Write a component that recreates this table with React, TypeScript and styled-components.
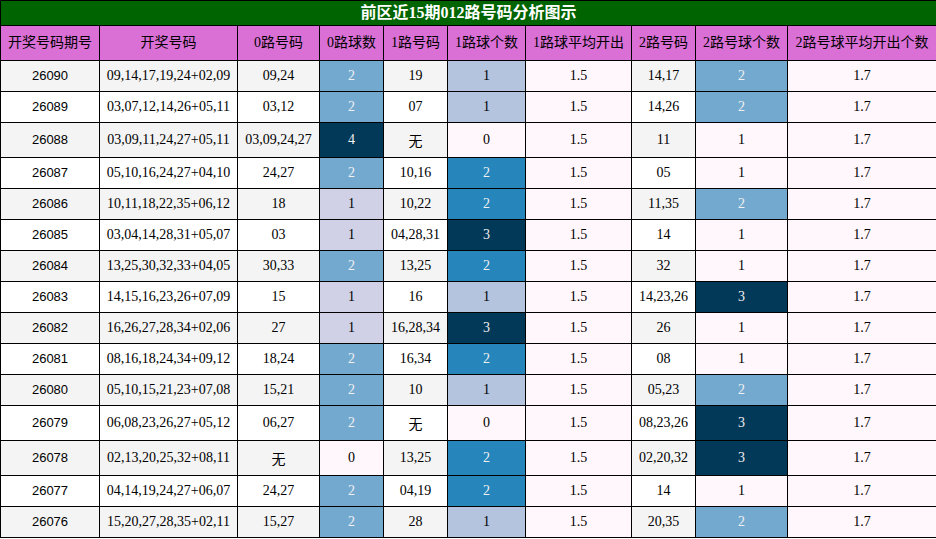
import React from "react";
import styled, { createGlobalStyle } from "styled-components";

const GlobalStyle = createGlobalStyle`
  html, body { margin: 0; padding: 0; background: #ffffff; }
  body { font-family: "Liberation Serif", "Noto Sans CJK SC", serif; }
`;

const Table = styled.table`
  width: 936px;
  table-layout: fixed;
  border-collapse: collapse;
  font-family: "Liberation Serif", "Noto Sans CJK SC", serif;
  font-size: 14px;
  color: #000;
`;

const Caption = styled.th`
  background: #006400;
  color: #ffffff;
  font-weight: bold;
  font-size: 16px;
  line-height: 24px;
  padding: 0;
  border: 1px solid #000;
  text-align: center;
  font-family: "Liberation Serif", "Noto Sans CJK SC", serif;
`;

const HeadCell = styled.th`
  background: #da70d6;
  color: #000;
  font-weight: normal;
  font-size: 14px;
  line-height: 34px;
  padding: 0 2px;
  border: 1px solid #000;
  text-align: center;
  white-space: nowrap;
  font-family: "Liberation Serif", "Noto Sans CJK SC", serif;
`;

const Cell = styled.td<{ $bg: string; $fg: string; $sans?: boolean }>`
  background: ${(p) => p.$bg};
  color: ${(p) => p.$fg};
  border: 1px solid #000;
  padding: 7px 2px;
  text-align: center;
  white-space: nowrap;
  font-family: ${(p) =>
    p.$sans
      ? `"Liberation Sans", "Noto Sans CJK SC", sans-serif`
      : `"Liberation Serif", "Noto Sans CJK SC", serif`};
  font-size: ${(p) => (p.$sans ? "13px" : "14px")};
  line-height: ${(p) => (p.$sans ? "16px" : "normal")};
`;

const widths = [99, 138, 82, 64, 64, 78, 106, 64, 92, 149];
const headers = [
  "开奖号码期号",
  "开奖号码",
  "0路号码",
  "0路球数",
  "1路号码",
  "1路球个数",
  "1路球平均开出",
  "2路号码",
  "2路号球个数",
  "2路号球平均开出个数",
];

type Row = [string, string, string, number, string, number, string, string, number, string];

const rows: Row[] = [
  ["26090", "09,14,17,19,24+02,09", "09,24", 2, "19", 1, "1.5", "14,17", 2, "1.7"],
  ["26089", "03,07,12,14,26+05,11", "03,12", 2, "07", 1, "1.5", "14,26", 2, "1.7"],
  ["26088", "03,09,11,24,27+05,11", "03,09,24,27", 4, "无", 0, "1.5", "11", 1, "1.7"],
  ["26087", "05,10,16,24,27+04,10", "24,27", 2, "10,16", 2, "1.5", "05", 1, "1.7"],
  ["26086", "10,11,18,22,35+06,12", "18", 1, "10,22", 2, "1.5", "11,35", 2, "1.7"],
  ["26085", "03,04,14,28,31+05,07", "03", 1, "04,28,31", 3, "1.5", "14", 1, "1.7"],
  ["26084", "13,25,30,32,33+04,05", "30,33", 2, "13,25", 2, "1.5", "32", 1, "1.7"],
  ["26083", "14,15,16,23,26+07,09", "15", 1, "16", 1, "1.5", "14,23,26", 3, "1.7"],
  ["26082", "16,26,27,28,34+02,06", "27", 1, "16,28,34", 3, "1.5", "26", 1, "1.7"],
  ["26081", "08,16,18,24,34+09,12", "18,24", 2, "16,34", 2, "1.5", "08", 1, "1.7"],
  ["26080", "05,10,15,21,23+07,08", "15,21", 2, "10", 1, "1.5", "05,23", 2, "1.7"],
  ["26079", "06,08,23,26,27+05,12", "06,27", 2, "无", 0, "1.5", "08,23,26", 3, "1.7"],
  ["26078", "02,13,20,25,32+08,11", "无", 0, "13,25", 2, "1.5", "02,20,32", 3, "1.7"],
  ["26077", "04,14,19,24,27+06,07", "24,27", 2, "04,19", 2, "1.5", "14", 1, "1.7"],
  ["26076", "15,20,27,28,35+02,11", "15,27", 2, "28", 1, "1.5", "20,35", 2, "1.7"],
];

// PuBu colormap stops
const PUBU = [
  "#fff7fb", "#ece7f2", "#d0d1e6", "#a6bddb", "#74a9cf",
  "#3690c0", "#0570b0", "#045a8d", "#023858",
];

function hexToRgb(h: string): number[] {
  const n = parseInt(h.slice(1), 16);
  return [(n >> 16) & 255, (n >> 8) & 255, n & 255];
}

function pubu(t: number): number[] {
  const x = Math.max(0, Math.min(1, t)) * (PUBU.length - 1);
  const i = Math.min(PUBU.length - 2, Math.floor(x));
  const f = x - i;
  const a = hexToRgb(PUBU[i]);
  const b = hexToRgb(PUBU[i + 1]);
  return a.map((v, k) => Math.round(v + (b[k] - v) * f));
}

function lum(c: number[]): number {
  const l = c.map((v) => {
    const s = v / 255;
    return s <= 0.03928 ? s / 12.92 : Math.pow((s + 0.055) / 1.055, 2.4);
  });
  return 0.2126 * l[0] + 0.7152 * l[1] + 0.0722 * l[2];
}

const gradientCols = [3, 5, 6, 8, 9];

function colRange(ci: number): [number, number] {
  const vals = rows.map((r) => Number(r[ci]));
  return [Math.min(...vals), Math.max(...vals)];
}

const ranges: Record<number, [number, number]> = {};
gradientCols.forEach((c) => (ranges[c] = colRange(c)));

function cellColors(ci: number, ri: number, v: string | number): { bg: string; fg: string } {
  if (gradientCols.includes(ci)) {
    const [lo, hi] = ranges[ci];
    const t = hi === lo ? 0 : (Number(v) - lo) / (hi - lo);
    const c = pubu(t);
    const bg = `rgb(${c[0]}, ${c[1]}, ${c[2]})`;
    return { bg, fg: lum(c) < 0.408 ? "#f1f1f1" : "#000000" };
  }
  return { bg: ri % 2 === 0 ? "#f4f4f4" : "#ffffff", fg: "#000000" };
}

export default function App() {
  return (
    <>
      <GlobalStyle />
      <Table>
        <colgroup>
          {widths.map((w, i) => (
            <col key={i} style={{ width: w }} />
          ))}
        </colgroup>
        <thead>
          <tr>
            <Caption colSpan={10}>前区近15期012路号码分析图示</Caption>
          </tr>
          <tr>
            {headers.map((h) => (
              <HeadCell key={h}>{h}</HeadCell>
            ))}
          </tr>
        </thead>
        <tbody>
          {rows.map((r, ri) => (
            <tr key={r[0]}>
              {r.map((v, ci) => {
                const { bg, fg } = cellColors(ci, ri, v);
                return (
                  <Cell key={ci} $bg={bg} $fg={fg} $sans={ci === 0}>
                    {v}
                  </Cell>
                );
              })}
            </tr>
          ))}
        </tbody>
      </Table>
    </>
  );
}
